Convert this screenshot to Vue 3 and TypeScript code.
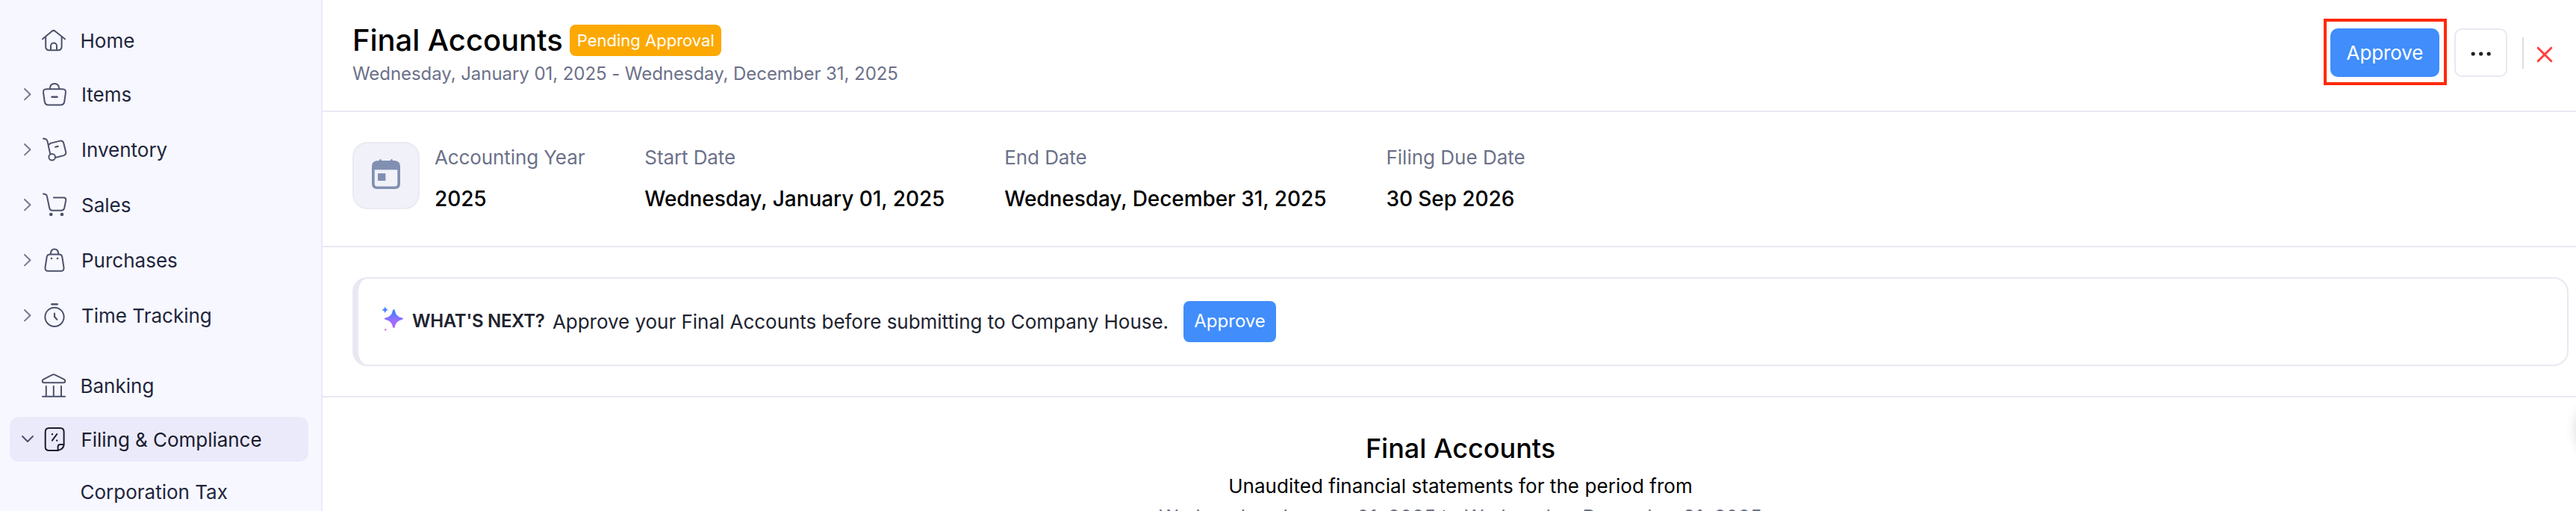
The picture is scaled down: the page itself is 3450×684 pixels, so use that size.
<script setup lang="ts">
interface Shape { d: string; fill?: boolean; w?: number }
interface NavItem { label: string; shapes?: Shape[]; arrow?: 'right' | 'down'; kind?: string }
interface Fact { label: string; value: string }

const dot = (x: number, y: number, r: number): string =>
  `M${x - r} ${y}a${r} ${r} 0 1 0 ${2 * r} 0a${r} ${r} 0 1 0 ${-2 * r} 0z`

const nav: NavItem[] = [
  {
    label: 'Home', kind: 'plain',
    shapes: [
      { d: 'M1 14.3 13.6 3.7Q15.7 2 17.8 3.7L31 14.3' },
      { d: 'M5.2 11.5V24.2Q5.2 29.2 10.2 29.2H21.6Q26.6 29.2 26.6 24.2V11.5' },
      { d: 'M12 29V23.6a4 4 0 0 1 8 0V29' },
    ],
  },
  {
    label: 'Items', arrow: 'right', kind: 'gap12',
    shapes: [
      { d: 'M5.5 9.2H26.5Q31.6 9.2 30.9 14.2L29.2 26.3Q28.4 30.6 24.2 30.6H7.8Q3.6 30.6 2.8 26.3L1.1 14.2Q.4 9.2 5.5 9.2z' },
      { d: 'M9.7 9C9.9 4.6 12.4 2 16 2S22.1 4.6 22.3 9' },
      { d: 'M12.5 19.7H19.6', w: 2.4 },
    ],
  },
  {
    label: 'Inventory', arrow: 'right',
    shapes: [
      { d: 'M1 1.5C4.5 1.6 6 2.6 6.6 5.4L10.2 22' },
      { d: dot(12.7, 26.3, 4.3) },
      { d: 'M8.6 9.4 11 7.6 23.4 4.6Q27.2 3.9 28.2 7.4L31.2 19.4Q31.7 22.9 28.4 24.1L17 27' },
      { d: 'M17.2 12.7 20.6 11.9', w: 2.2 },
    ],
  },
  {
    label: 'Sales', arrow: 'right',
    shapes: [
      { d: 'M1 1.5C4.2 1.6 5.6 2.2 6 5L9.1 20Q9.8 23.7 13.2 23.7H25Q28.3 23.7 29.2 20.5L31.2 10.2Q31.6 6.4 28.5 6.4H14.9' },
      { d: dot(11.3, 29, 2.3), fill: true },
      { d: dot(26, 29, 2.3), fill: true },
    ],
  },
  {
    label: 'Purchases', arrow: 'right',
    shapes: [
      { d: 'M10 8.4H22Q25.7 8.4 26.3 12L28.5 26.2Q29 30.8 24.6 30.8H7.4Q3 30.8 3.5 26.2L5.7 12Q6.3 8.4 10 8.4z' },
      { d: 'M10.8 8.2C10.8 3.6 13 1.4 16 1.4S21.2 3.6 21.2 8.2' },
      { d: dot(12, 14, 1.3), fill: true },
      { d: dot(20, 14, 1.3), fill: true },
    ],
  },
  {
    label: 'Time Tracking', arrow: 'right',
    shapes: [
      { d: dot(16, 18.3, 12.6) },
      { d: 'M12.4 1.2H19.8', w: 2.4 },
      { d: 'M16 13.7V18L19.4 21.7', w: 2.2 },
    ],
  },
  {
    label: 'Banking', kind: 'plain gap34',
    shapes: [
      { d: 'M14.2 1.6Q15.8 .7 17.4 1.6L30 7.9Q31.2 8.6 31.2 10Q31.2 12.3 29 12.3H3Q.8 12.3 .8 10Q.8 8.6 2 7.9z' },
      { d: 'M5.8 17V29.6M15.8 17V29.6M26 17V29.6M1 30.7H31' },
    ],
  },
  {
    label: 'Filing & Compliance', arrow: 'down', kind: 'active gap12',
    shapes: [
      { d: 'M28.6 23V6.3Q28.6 1 23.6 1H8.7Q3.7 1 3.7 6V26Q3.7 31 8.7 31H20.5Q28.6 29 28.6 23z' },
      { d: 'M20.6 30.8V26Q20.6 23 23.6 23H28.4' },
      { d: 'M19.3 9 12.9 17.7' },
      { d: dot(13, 9.2, 1.2), fill: true },
      { d: dot(19.2, 17.6, 1.2), fill: true },
    ],
  },
  { label: 'Corporation Tax', kind: 'child plain gap10' },
]

const facts: Fact[] = [
  { label: 'Accounting Year', value: '2025' },
  { label: 'Start Date', value: 'Wednesday, January 01, 2025' },
  { label: 'End Date', value: 'Wednesday, December 31, 2025' },
  { label: 'Filing Due Date', value: '30 Sep 2026' },
]
</script>

<template>
  <div class="app">
    <nav class="sidebar">
      <a v-for="item in nav" :key="item.label" class="item" :class="item.kind">
        <span class="chevron">
          <svg v-if="item.arrow === 'right'" width="12" height="18" viewBox="0 0 12 18"><path d="M2 2l7.500 7.200L2 16.400" /></svg>
          <svg v-if="item.arrow === 'down'" class="down" width="18" height="12" viewBox="0 0 18 12"><path d="M2 2l7 7 7-7" /></svg>
        </span>
        <svg class="icon" width="32" height="32" viewBox="0 0 32 32">
          <path
            v-for="(s, i) in item.shapes" :key="i" :d="s.d"
            :class="{ solid: s.fill }" :stroke-width="s.w ?? 2"
          />
        </svg>
        <span class="label">{{ item.label }}</span>
      </a>
    </nav>

    <main class="main">
      <header class="header">
        <div class="heading">
          <div class="title-row">
            <h1>Final Accounts</h1>
            <span class="badge">Pending Approval</span>
          </div>
          <p class="period">Wednesday, January 01, 2025 - Wednesday, December 31, 2025</p>
        </div>
        <div class="actions">
          <div class="highlight"><button class="btn primary">Approve</button></div>
          <button class="btn more">
            <svg width="30" height="8" viewBox="0 0 30 8"><circle cx="4.2" cy="4" r="2.6" /><circle cx="14.7" cy="4" r="2.6" /><circle cx="25.2" cy="4" r="2.6" /></svg>
          </button>
          <span class="divider"></span>
          <svg class="close" width="22" height="22" viewBox="0 0 22 22"><path d="M2.200 2.200 19.800 19.800M19.800 2.200 2.200 19.800" /></svg>
        </div>
      </header>

      <section class="summary">
        <div class="tile">
          <svg width="38" height="40" viewBox="0 0 38 40">
            <path fill-rule="evenodd" d="M10 2V1.500a1.500 1.500 0 0 1 3 0V2H25V1.500a1.500 1.500 0 0 1 3 0V2H30.500Q38 2.500 38 9.500V33Q38 40 31 40H7Q0 40 0 33V9.500Q0 2.500 7.500 2zM3.700 14.200V33Q3.700 36.400 7 36.400H31Q34.300 36.400 34.300 33V14.200zM8.800 19h8.800q.8 0 .8 .8v8.400q0 .8-.8 .8H8.800q-.8 0-.8-.8v-8.400q0-.8 .8-.8z" />
          </svg>
        </div>
        <div v-for="f in facts" :key="f.label" class="fact">
          <span class="fact-label">{{ f.label }}</span>
          <span class="fact-value">{{ f.value }}</span>
        </div>
      </section>

      <section class="next">
        <div class="callout">
          <svg class="spark" width="30" height="34" viewBox="0 0 30 34">
            <defs>
              <linearGradient id="spark-fill" x1="0" y1="0" x2="0" y2="34" gradientUnits="userSpaceOnUse">
                <stop offset="0" stop-color="#3d82ff" />
                <stop offset=".22" stop-color="#4f7dff" />
                <stop offset=".5" stop-color="#9070ff" />
                <stop offset=".8" stop-color="#c060fa" />
                <stop offset="1" stop-color="#e05af0" />
              </linearGradient>
            </defs>
            <g fill="url(#spark-fill)">
              <path d="M17.400 3Q18.500 3 18.900 5Q20.400 12.800 28 14.300Q30 14.700 30 15.600T28 16.900Q20.400 18.400 18.900 26.200Q18.500 28.200 17.400 28.200T15.900 26.200Q14.400 18.400 6.700 16.900Q4.700 16.500 4.700 15.600T6.700 14.300Q14.400 12.800 15.900 5Q16.300 3 17.400 3z" />
              <path d="M5.700 0Q6.600 0 6.900 2.500Q9.300 2.800 9.300 3.700T6.900 4.900Q6.600 7.400 5.700 7.400T4.500 4.900Q2 4.600 2 3.700T4.500 2.500Q4.800 0 5.700 0z" />
              <path d="M6.300 28.500Q6.700 29.900 8.100 30.300Q6.700 30.700 6.300 32.100Q5.900 30.700 4.500 30.300Q5.900 29.900 6.300 28.500z" />
            </g>
          </svg>
          <strong class="lead">WHAT'S NEXT?</strong>
          <span class="message">Approve your Final Accounts before submitting to Company House.</span>
          <button class="btn small">Approve</button>
        </div>
      </section>

      <section class="document">
        <h2>Final Accounts</h2>
        <p class="statement">Unaudited financial statements for the period from</p>
        <p class="range">Wednesday, January 01, 2025 to Wednesday, December 31, 2025</p>
      </section>
      <div class="handle"></div>
    </main>
  </div>
</template>

<style>
body { margin: 0; overflow: hidden; }
</style>

<style scoped>
.app {
  display: flex;
  width: 3450px;
  height: 684px;
  overflow: hidden;
  background: #fff;
  font-family: Inter, "Liberation Sans", sans-serif;
  color: #000;
}
.app * { box-sizing: border-box; }
h1, h2, p { margin: 0; }

.sidebar {
  flex: none;
  display: flex;
  flex-direction: column;
  width: 432px;
  padding: 24px 17px 0 13px;
  background: #f7f7ff;
  border-right: 2px solid #ebeafb;
  overflow: hidden;
}
.item {
  flex: none;
  display: flex;
  align-items: center;
  height: 60px;
  margin-top: 14px;
  border-radius: 12px;
  color: #21263c;
}
.item:first-child { margin-top: 0; }
.item.gap12 { margin-top: 12px; }
.item.gap34 { margin-top: 34px; }
.item.gap10 { margin-top: 10px; }
.item.active { background: #ebeafb; color: #1a1c2e; }
.chevron { flex: none; display: flex; width: 44px; padding-left: 18px; color: #777990; }
.plain .chevron { width: 43px; }
.active .chevron { padding-left: 15px; color: #4a5068; }
.chevron path { fill: none; stroke: currentColor; stroke-width: 2; stroke-linecap: round; stroke-linejoin: round; }
.icon { flex: none; color: #4d526b; overflow: visible; }
.active .icon { color: #1a1c2e; }
.icon path { fill: none; stroke: currentColor; stroke-linecap: round; stroke-linejoin: round; }
.icon path.solid { fill: currentColor; stroke: none; }
.label { align-self: flex-start; margin-left: 20px; font-size: 26px; line-height: 61px; white-space: nowrap; }
.plain .label { margin-left: 19.500px; }
.active .label { margin-left: 19.500px; letter-spacing: -.04px; }

.main { position: relative; flex: 1; min-width: 0; }
.header {
  display: flex;
  justify-content: space-between;
  height: 150px;
  padding: 0 31px 0 40px;
  border-bottom: 2px solid #e9e8f2;
}
.heading { padding-top: 32px; }
.title-row { display: flex; align-items: center; gap: 9px; height: 44px; }
h1 { font-size: 40px; font-weight: 500; line-height: 44px; letter-spacing: -.05px; white-space: nowrap; }
.badge {
  width: 203px;
  height: 42px;
  padding-left: 10px;
  border-radius: 8px;
  background: #fca903;
  color: #fff;
  font-size: 22px;
  line-height: 42px;
  white-space: nowrap;
}
.period { margin-top: 7px; font-size: 24px; line-height: 31px; letter-spacing: -.06px; color: #6c718a; white-space: nowrap; }

.actions { display: flex; align-items: center; height: 89px; margin-top: 25px; }
.highlight { display: flex; padding: 9px 6px 7px 5px; border: 4px solid #ff2a0a; }
.btn {
  display: flex;
  align-items: center;
  justify-content: center;
  padding: 0;
  border: 0;
  font-family: inherit;
  color: #fff;
  background: #408dfb;
}
.primary { width: 146px; height: 65px; border-radius: 10px; font-size: 26px; letter-spacing: -.1px; }
.more { width: 71px; height: 65px; margin: 2px 0 0 10px; border: 2px solid #e9e8f2; border-radius: 10px; background: #fff; }
.more circle { fill: #212121; }
.more svg { margin-top: 3px; }
.divider { width: 2px; height: 42px; margin-left: 20px; margin-top: 3px; background: #ddd; }
.close { margin: 7px 0 0 17px; }
.close path { fill: none; stroke: #ff4040; stroke-width: 3; stroke-linecap: round; }

.summary {
  display: flex;
  height: 181px;
  padding: 40px 0 0 40px;
  gap: 80px;
  border-bottom: 2px solid #e9e8f2;
}
.tile {
  display: flex;
  align-items: center;
  justify-content: center;
  width: 90px;
  height: 90px;
  margin-right: -60px;
  border: 2px solid #ebeaf2;
  border-radius: 20px;
  background: #f1f1fa;
}
.tile path { fill: #8190b1; }
.tile svg { margin-top: -4px; }
.fact { display: flex; flex-direction: column; white-space: nowrap; }
.fact-label { font-size: 26px; line-height: 41px; letter-spacing: -.1px; color: #6c718a; }
.fact:last-child .fact-label { letter-spacing: 0; }
.fact-value { margin-top: 14px; font-size: 28px; font-weight: 500; line-height: 42px; letter-spacing: -.07px; }

.next { height: 201px; padding: 40px 10px 0 40px; border-bottom: 2px solid #e9e8f2; }
.callout {
  display: flex;
  align-items: center;
  height: 119px;
  padding-left: 30px;
  border: 2px solid #e9e8f2;
  border-left-width: 8px;
  border-radius: 20px;
  color: #21232f;
  white-space: nowrap;
}
.spark { margin-top: -5px; }
.lead { margin: -2px 0 0 12px; font-size: 24px; font-weight: 600; line-height: 31px; letter-spacing: -.3px; }
.message { margin-left: 10.500px; font-size: 26px; line-height: 33px; letter-spacing: -.03px; }
.small { width: 124px; height: 55px; margin-left: 20px; border-radius: 8px; font-size: 24px; padding-bottom: 2px; }

.document {
  display: flex;
  flex-direction: column;
  align-items: center;
  height: 152px;
  padding: 44px 10px 0 40px;
  overflow: hidden;
  white-space: nowrap;
}
h2 { font-size: 36px; font-weight: 500; line-height: 48px; }
.statement { margin-top: 9px; font-size: 26px; line-height: 35px; letter-spacing: .06px; }
.range { margin-top: 3px; font-size: 26px; line-height: 41px; color: #6c718a; }
.handle {
  position: absolute;
  right: -88px;
  top: 531px;
  width: 88px;
  height: 88px;
  border-radius: 50%;
  box-shadow: 0 0 16px rgba(0, 0, 0, .16);
}
</style>
